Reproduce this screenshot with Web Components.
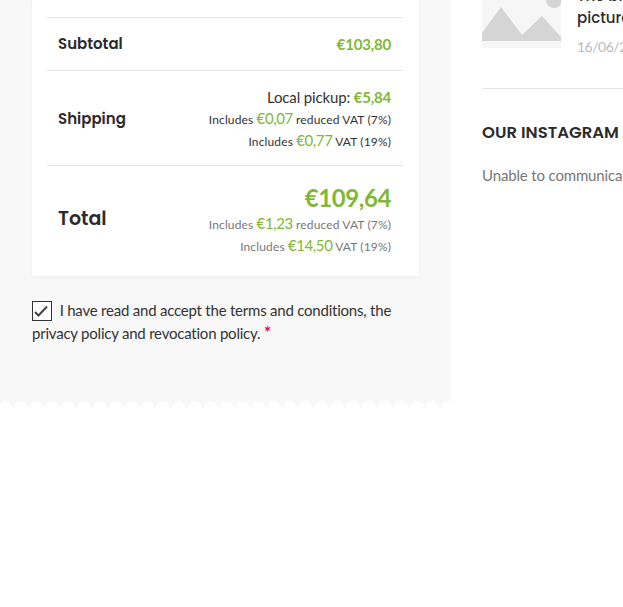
<!DOCTYPE html>
<html>
<head>
<meta charset="utf-8">
<style>
  html, body { margin: 0; height: 607px; overflow: hidden; background: #fff; }
  body { font-family: Lato, sans-serif; }
</style>
</head>
<body>
<checkout-page>
  <order-panel slot="main">
    <order-row label="Subtotal" kind="subtotal">
      <price-tag>€103,80</price-tag>
    </order-row>
    <order-row label="Shipping" kind="shipping">
      <div style="font-size:15px;line-height:22px;letter-spacing:-.15px;margin-top:1px">Local pickup: <price-tag>€5,84</price-tag></div>
      <tax-line amount="€0,07" rate="reduced VAT (7%)"></tax-line>
      <tax-line amount="€0,77" rate="VAT (19%)"></tax-line>
    </order-row>
    <order-row label="Total" kind="total">
      <price-tag big>€109,64</price-tag>
      <tax-line muted amount="€1,23" rate="reduced VAT (7%)"></tax-line>
      <tax-line muted amount="€14,50" rate="VAT (19%)"></tax-line>
    </order-row>
  </order-panel>
  <terms-check slot="main">I have read and accept the terms and conditions, the privacy policy and revocation policy.</terms-check>
  <side-bar slot="side"></side-bar>
</checkout-page>

<script>
class CheckoutPage extends HTMLElement {
  constructor() {
    super();
    this.attachShadow({mode: 'open'});
    // scalloped bottom edge: row of white circles over the grey panel
    this.shadowRoot.innerHTML = `
    <style>
      :host { display: flex; align-items: flex-start; width: 623px; height: 607px; overflow: hidden; }
      .main { width: 451px; height: 408px; flex: none; box-sizing: border-box; padding: 0 32px;
        background: #f8f8f8; position: relative; }
      .main::after { content: ''; position: absolute; left: 0; right: 0; bottom: 0; height: 7px;
        background: radial-gradient(circle at 7.9px 6.9px, #fff 6.4px, transparent 7px) -3px 0 / 15.83px 7px repeat-x; }
      .side { flex: none; width: 172px; box-sizing: border-box; padding-left: 31px; }
    </style>
    <div class="main"><slot name="main"></slot></div>
    <div class="side"><slot name="side"></slot></div>
    `
  }
}

class OrderPanel extends HTMLElement {
  constructor() {
    super();
    this.attachShadow({mode: 'open'});
    this.shadowRoot.innerHTML = `
    <style>
      :host { display: block; background: #fff; padding: 17px 16px 0 15px; height: 259px;
        box-shadow: 0 1px 3px rgba(0,0,0,.05); }
    </style>
    <slot></slot>
    `
  }
}

class OrderRow extends HTMLElement {
  constructor() {
    super();
    this.attachShadow({mode: 'open'});
    this.shadowRoot.innerHTML = `
    <style>
      :host { display: flex; align-items: center; justify-content: space-between; box-sizing: border-box;
        border-top: 1px solid #e6e6e6; height: 53px; padding: 0 12px 0 11px; color: #333; }
      :host([kind="subtotal"]) { padding-bottom: 1px; }
      :host([kind="shipping"]) { height: 95px; }
      :host([kind="total"]) { height: 111px; padding-bottom: 2px; }
      .label { font-family: Poppins, Inter, sans-serif; font-weight: 600; font-size: 15px; color: #2e2a2a; }
      :host([kind="total"]) .label { font-size: 19px; padding-bottom: 4px; }
      .value { text-align: right; }
    </style>
    <div class="label"></div>
    <div class="value"><slot></slot></div>
    `
  }
  connectedCallback() {
    this.shadowRoot.querySelector('.label').textContent = this.getAttribute('label')
  }
}

class PriceTag extends HTMLElement {
  constructor() {
    super();
    this.attachShadow({mode: 'open'});
    this.shadowRoot.innerHTML = `
    <style>
      :host { color: #82b735; font-size: 15px; font-weight: 700; letter-spacing: -.2px; }
      :host([big]) { display: block; font-size: 24px; line-height: 30px; letter-spacing: -.4px; }
    </style>
    <slot></slot>
    `
  }
}

class TaxLine extends HTMLElement {
  constructor() {
    super();
    this.attachShadow({mode: 'open'});
    this.shadowRoot.innerHTML = `
    <style>
      :host { display: block; font-size: 12px; line-height: 21px; color: #333; letter-spacing: .14px; }
      :host([muted]) { color: #777; }
      .amount { color: #82b735; font-size: 15px; letter-spacing: -.4px; }
    </style>
    <span>Includes</span> <span class="amount"></span> <span class="rate"></span>
    `
  }
  connectedCallback() {
    this.shadowRoot.querySelector('.amount').textContent = this.getAttribute('amount')
    this.shadowRoot.querySelector('.rate').textContent = this.getAttribute('rate')
  }
}

class TermsCheck extends HTMLElement {
  constructor() {
    super();
    this.attachShadow({mode: 'open'});
    this.shadowRoot.innerHTML = `
    <style>
      :host { display: block; margin-top: 23px; width: 372px; font-size: 15px; line-height: 23px; color: #333; letter-spacing: -.22px; }
      .box { display: inline-block; box-sizing: border-box; width: 20px; height: 20px; border: 1.5px solid #333;
        background: #fff; vertical-align: -5px; margin-right: 4px; }
      .box svg { display: block; }
      .req { color: #f0004c; font-size: 17px; font-weight: 700; line-height: 1; }
    </style>
    <span class="box"><svg width="17" height="17" viewBox="0 0 17 17"><path d="M2 10l3.5 3.5L14 4.5" fill="none" stroke="#444" stroke-width="2"/></svg></span>
    <slot></slot> <span class="req">*</span>
    `
  }
}

class SideBar extends HTMLElement {
  constructor() {
    super();
    this.attachShadow({mode: 'open'});
    this.shadowRoot.innerHTML = `
    <style>
      :host { display: block; margin-top: -20px; white-space: nowrap; overflow: hidden; }
      .post { display: flex; gap: 16px; height: 108px; border-bottom: 1px solid #e6e6e6; }
      .thumb { flex: none; width: 79px; height: 68px; }
      .thumb svg { display: block; }
      .title { font-family: Poppins, Inter, sans-serif; font-size: 15px; font-weight: 500; line-height: 22px; color: #2e2a2a; padding-top: 5px; }
      .date { font-size: 14px; line-height: 20px; color: #bbb; margin-top: 8px; letter-spacing: -.5px; }
      h3 { font-family: Poppins, Inter, sans-serif; font-size: 16.5px; font-weight: 600; color: #2e2a2a; margin: 32px 0 0; line-height: 24px; }
      p { margin: 18px 0 0; font-size: 15px; line-height: 24px; color: #777; letter-spacing: -.15px; }
    </style>
    <div class="post">
      <div class="thumb">
        <svg width="79" height="68" viewBox="0 0 79 68">
          <rect width="79" height="68" fill="#f6f6f6"/>
          <path d="M0 61V53L19 27 40 55 60 36 79 57V61Z" fill="#d5d5d5"/>
          <circle cx="72" cy="20" r="8" fill="#d5d5d5"/>
        </svg>
      </div>
      <div>
        <div class="title">The big<br>picture</div>
        <div class="date">16/06/2021</div>
      </div>
    </div>
    <h3>OUR INSTAGRAM</h3>
    <p>Unable to communicate with Instagram.</p>
    `
  }
}

customElements.define('checkout-page', CheckoutPage)
customElements.define('order-panel', OrderPanel)
customElements.define('order-row', OrderRow)
customElements.define('price-tag', PriceTag)
customElements.define('tax-line', TaxLine)
customElements.define('terms-check', TermsCheck)
customElements.define('side-bar', SideBar)
</script>
</body>
</html>
